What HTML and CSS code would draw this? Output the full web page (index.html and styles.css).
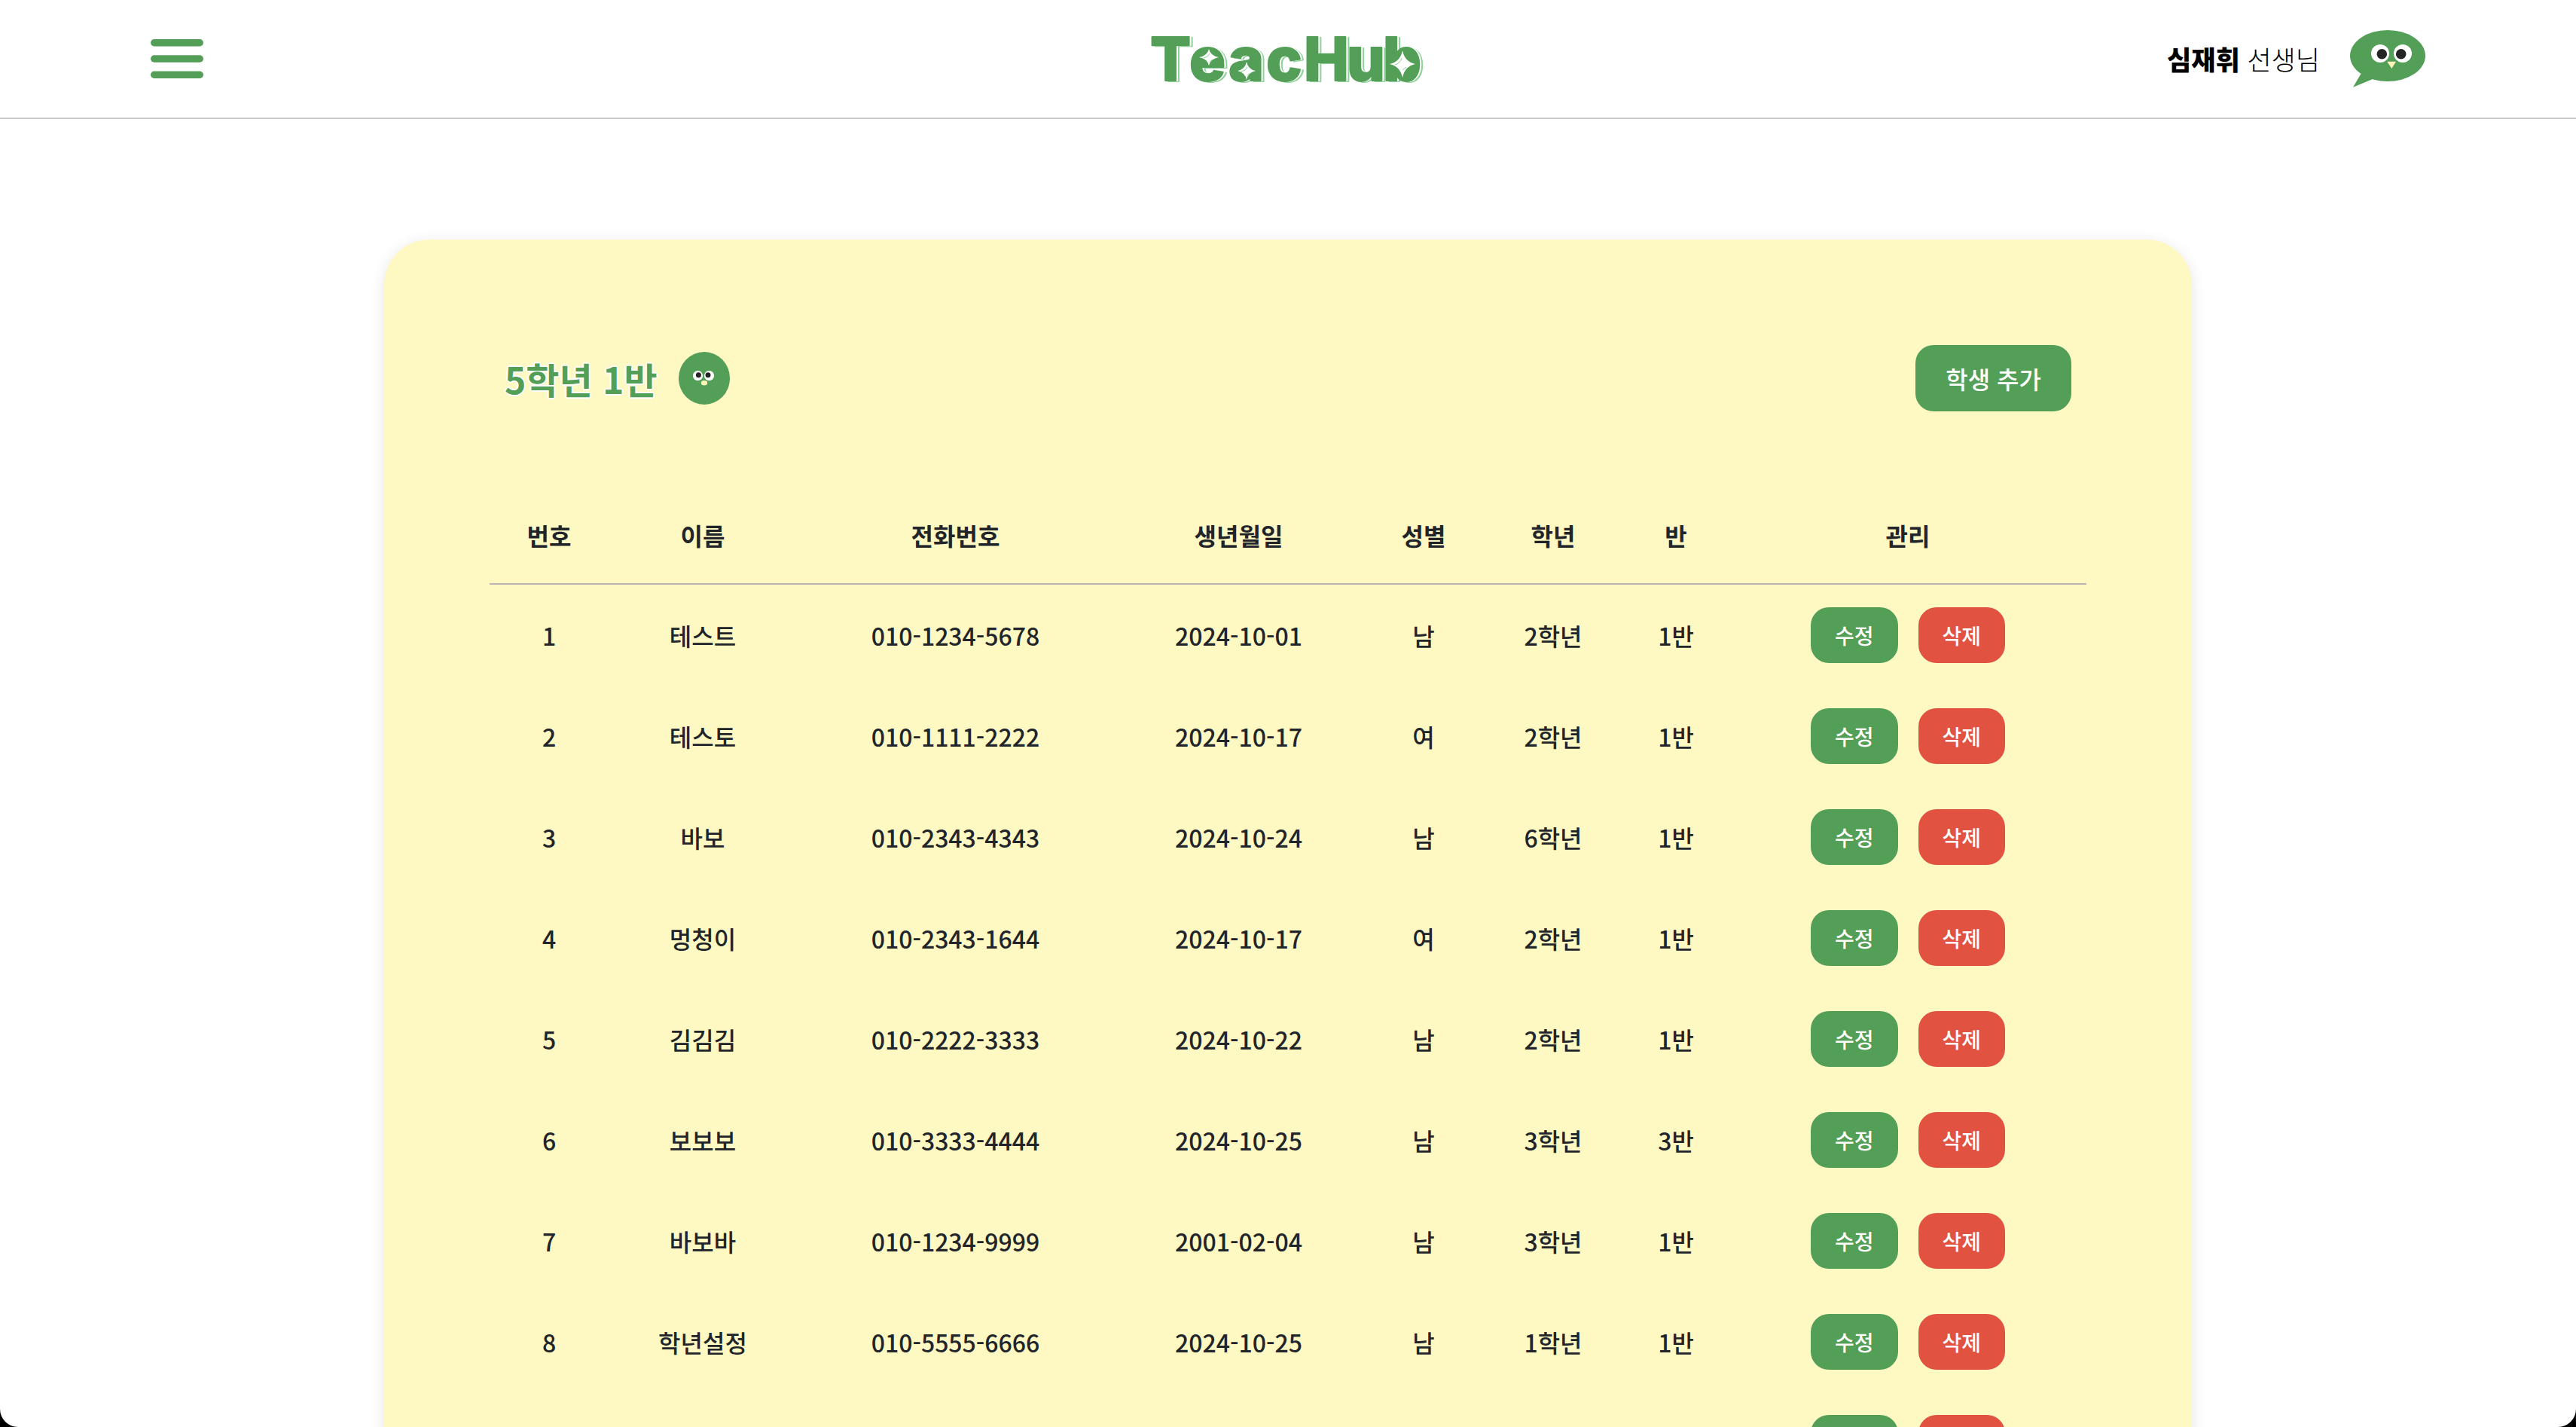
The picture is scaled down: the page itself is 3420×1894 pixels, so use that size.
FILE: index.html
```html
<!DOCTYPE html>
<html lang="ko">
<head>
<meta charset="utf-8">
<title>TeacHub</title>
<link rel="stylesheet" href="styles.css">
</head>
<body>
<div class="app">
  <header class="topbar">
    <button class="menu" type="button" aria-label="메뉴">
      <svg width="70" height="54" viewBox="0 0 70 54" fill="#539f57" aria-hidden="true">
        <rect y="1" width="70" height="9.400" rx="4.700"/>
        <rect y="22.300" width="70" height="9.400" rx="4.700"/>
        <rect y="43.600" width="70" height="9.400" rx="4.700"/>
      </svg>
    </button>
    <a class="logo" href="#" aria-label="TeacHub">
      <svg width="364" height="76" viewBox="0 0 364 76">
        <g class="logo-text">
          <text class="logo-back" x="3 55 107 157 207 264 312" y="68">TeacHub</text>
          <text class="logo-gap" aria-hidden="true" x="1 53 105 155 205 262 310" y="67">TeacHub</text>
          <text class="logo-front" aria-hidden="true" x="-1 51 103 153 203 260 308" y="67">TeacHub</text>
        </g>
        <g fill="#539f57">
          <ellipse cx="77" cy="36" rx="15" ry="12"/>
          <ellipse cx="127" cy="54" rx="13" ry="12"/>
          <ellipse cx="334" cy="45" rx="17" ry="18"/>
        </g>
        <g fill="#fff">
          <path d="M77 25Q79 34 90 36Q79 38 77 47Q75 38 64 36Q75 34 77 25Z"/>
          <path d="M127 42Q129 52 139 54Q129 56 127 66Q125 56 115 54Q125 52 127 42Z"/>
          <path d="M334 27Q337 42 351 45Q337 48 334 63Q331 48 317 45Q331 42 334 27Z"/>
        </g>
        <g fill="none" stroke="#8fd19a" stroke-width="1">
          <path d="M78 31Q76 36 70 37M78 42L82 39"/>
          <path d="M128 49Q126 54 120 55M128 60L132 57"/>
          <path d="M333 37Q331 44 324 46M334 53L339 49"/>
        </g>
      </svg>
    </a>
    <div class="user">
      <p class="user-name"><strong>심재휘</strong> 선생님</p>
      <svg width="100" height="76" viewBox="0 0 100 76" aria-hidden="true">
        <ellipse cx="50" cy="34" rx="50" ry="34" fill="#539f57"/>
        <path d="M14.300 58.300L4 75.700L30 65L34 50Z" fill="#539f57"/>
        <circle cx="40" cy="31" r="12" fill="#fff"/>
        <circle cx="70" cy="31" r="12" fill="#fff"/>
        <circle cx="42.300" cy="31.700" r="6.800" fill="#252525"/>
        <circle cx="67.700" cy="31.700" r="6.800" fill="#252525"/>
        <path d="M49.300 41.700H61L55.300 51Z" fill="#fff3b8"/>
      </svg>
    </div>
  </header>

  <main class="card">
    <div class="card-head">
      <h1 class="class-name">5학년 1반</h1>
      <svg width="68" height="70" viewBox="0 0 68 70" aria-hidden="true">
        <ellipse cx="34" cy="35" rx="34" ry="35" fill="#539f57"/>
        <ellipse cx="25.500" cy="31.700" rx="6.600" ry="6.600" fill="#fff"/>
        <ellipse cx="40.500" cy="31.700" rx="6.600" ry="6.600" fill="#fff"/>
        <circle cx="26.400" cy="30.700" r="3.500" fill="#252525"/>
        <circle cx="39" cy="30.700" r="3.500" fill="#252525"/>
        <ellipse cx="34" cy="41.300" rx="4.200" ry="3.200" fill="#fff3b8"/>
      </svg>
      <button class="btn btn-add" type="button">학생 추가</button>
    </div>

    <table class="students">
      <colgroup>
        <col class="c-no"><col class="c-name"><col class="c-phone"><col class="c-birth">
        <col class="c-sex"><col class="c-grade"><col class="c-class"><col class="c-manage">
      </colgroup>
      <thead>
        <tr><th>번호</th><th>이름</th><th>전화번호</th><th>생년월일</th><th>성별</th><th>학년</th><th>반</th><th>관리</th></tr>
      </thead>
      <tbody>
        <tr><td>1</td><td>테스트</td><td>010-1234-5678</td><td>2024-10-01</td><td>남</td><td>2학년</td><td>1반</td><td><div class="actions"><button class="btn" type="button">수정</button><button class="btn btn-delete" type="button">삭제</button></div></td></tr>
        <tr><td>2</td><td>테스토</td><td>010-1111-2222</td><td>2024-10-17</td><td>여</td><td>2학년</td><td>1반</td><td><div class="actions"><button class="btn" type="button">수정</button><button class="btn btn-delete" type="button">삭제</button></div></td></tr>
        <tr><td>3</td><td>바보</td><td>010-2343-4343</td><td>2024-10-24</td><td>남</td><td>6학년</td><td>1반</td><td><div class="actions"><button class="btn" type="button">수정</button><button class="btn btn-delete" type="button">삭제</button></div></td></tr>
        <tr><td>4</td><td>멍청이</td><td>010-2343-1644</td><td>2024-10-17</td><td>여</td><td>2학년</td><td>1반</td><td><div class="actions"><button class="btn" type="button">수정</button><button class="btn btn-delete" type="button">삭제</button></div></td></tr>
        <tr><td>5</td><td>김김김</td><td>010-2222-3333</td><td>2024-10-22</td><td>남</td><td>2학년</td><td>1반</td><td><div class="actions"><button class="btn" type="button">수정</button><button class="btn btn-delete" type="button">삭제</button></div></td></tr>
        <tr><td>6</td><td>보보보</td><td>010-3333-4444</td><td>2024-10-25</td><td>남</td><td>3학년</td><td>3반</td><td><div class="actions"><button class="btn" type="button">수정</button><button class="btn btn-delete" type="button">삭제</button></div></td></tr>
        <tr><td>7</td><td>바보바</td><td>010-1234-9999</td><td>2001-02-04</td><td>남</td><td>3학년</td><td>1반</td><td><div class="actions"><button class="btn" type="button">수정</button><button class="btn btn-delete" type="button">삭제</button></div></td></tr>
        <tr><td>8</td><td>학년설정</td><td>010-5555-6666</td><td>2024-10-25</td><td>남</td><td>1학년</td><td>1반</td><td><div class="actions"><button class="btn" type="button">수정</button><button class="btn btn-delete" type="button">삭제</button></div></td></tr>
        <tr><td></td><td></td><td></td><td></td><td></td><td></td><td></td><td><div class="actions"><button class="btn" type="button">수정</button><button class="btn btn-delete" type="button">삭제</button></div></td></tr>
      </tbody>
    </table>
  </main>
</div>
</body>
</html>
```
FILE: styles.css
```css
* {
  box-sizing: border-box;
}

html {
  background: #000;
}

body {
  margin: 0;
  color: #212529;
  font-family: "Noto Sans CJK KR", sans-serif;
  font-size: 32px;
  line-height: 48px;
}

.app {
  height: 100vh;
  overflow-y: auto;
  scrollbar-width: none;
  background: #fff;
  border-radius: 0 0 24px 24px;
}

/* Top bar */
.topbar {
  display: grid;
  grid-template-columns: 1fr auto 1fr;
  align-items: center;
  padding: 40px 200px;
  border-bottom: 2px solid #ccc;
}

.menu {
  display: flex;
  justify-self: start;
  padding: 0;
  border: 0;
  background: none;
  cursor: pointer;
}

.logo {
  display: flex;
}

.logo svg {
  overflow: visible;
}

.logo-text {
  font-family: Inter, sans-serif;
  font-size: 80px;
  font-weight: 800;
  stroke-width: 2px;
  stroke-linejoin: round;
}

.logo-back {
  fill: #8fd19a;
  stroke: #8fd19a;
}

.logo-gap {
  fill: #fff;
  stroke: #fff;
}

.logo-front {
  fill: #539f57;
  stroke: #539f57;
}

.user {
  display: flex;
  justify-self: end;
  align-items: center;
  gap: 40px;
}

.user-name {
  margin: 0;
  color: #000;
  font-size: 35px;
  font-weight: 300;
}

.user-name strong {
  font-weight: 900;
}

/* Student list card */
.card {
  max-width: 2400px;
  margin: 160px auto;
  padding: 140px;
  background: #fef8c3;
  border-radius: 60px;
  box-shadow: 0 4px 20px rgba(0, 0, 0, 0.1);
}

.card-head {
  display: flex;
  align-items: center;
  gap: 28px;
  margin-bottom: 100px;
  padding: 0 20px;
}

.class-name {
  margin: 0;
  color: #539f57;
  font-size: 48px;
  font-weight: 700;
  text-shadow: -2px 0 #fff, 0 2px #fff, 2px 0 #fff, 0 -2px #fff;
}

.btn {
  padding: 16px 32px;
  border: 0;
  border-radius: 24px;
  background: #539f57;
  color: #fff;
  font: inherit;
  font-size: 28px;
  font-weight: 500;
  line-height: 42px;
  cursor: pointer;
}

.btn-add {
  margin-left: auto;
  padding: 20px 40px;
  font-size: 32px;
  line-height: 48px;
}

.btn-delete {
  background: #e15241;
}

.students {
  width: 100%;
  table-layout: fixed;
  border-collapse: separate;
  border-spacing: 0;
  text-align: center;
  font-weight: 500;
}

.c-no { width: 158px; }
.c-name { width: 250px; }
.c-phone { width: 421px; }
.c-birth { width: 331px; }
.c-sex { width: 160px; }
.c-grade { width: 184px; }
.c-class { width: 142px; }
.c-manage { width: 474px; }

.students th {
  padding: 40px 0;
  border-bottom: 2px solid #bab2b5;
  font-weight: 700;
}

.students td {
  padding: 30px 0;
}

.actions {
  display: flex;
  justify-content: center;
  gap: 27px;
}
```
